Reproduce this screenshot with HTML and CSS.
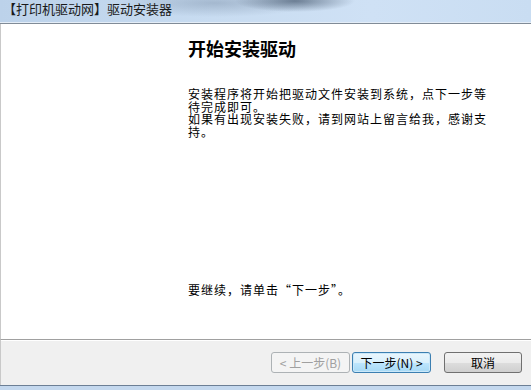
FILE: index.html
```html
<!DOCTYPE html>
<html lang="zh-CN">
<head>
    <meta charset="UTF-8">
    <meta name="viewport" content="width=device-width, initial-scale=1.0">
    <title>驱动安装器</title>
    <link rel="stylesheet" href="styles.css">
</head>
<body>

    <div class="window">
        <div class="titlebar">
            <span class="title">【打印机驱动网】驱动安装器</span>
        </div>

        <div class="content">
            <h2>开始安装驱动</h2>
            <p class="desc">安装程序将开始把驱动文件安装到系统，点下一步等待完成即可。<br>如果有出现安装失败，请到网站上留言给我，感谢支持。</p>
            <p class="hint">要继续，请单击“下一步”。</p>
        </div>

        <div class="footer">
            <button class="btn disabled">&lt; 上一步(B)</button>
            <button class="btn focused">下一步(N) &gt;</button>
            <button class="btn cancel">取消</button>
        </div>

        <div class="frame-bottom"></div>
    </div>

</body>
</html>
```

FILE: styles.css
```css
* {
    margin: 0;
    padding: 0;
    box-sizing: border-box;
}

body {
    width: 531px;
    height: 390px;
    overflow: hidden;
    font-family: "Noto Sans CJK SC", "Liberation Sans", sans-serif;
    color: #000;
    background: #fff;
}

.window {
    display: flex;
    flex-direction: column;
    height: 390px;
}

.titlebar {
    height: 24px;
    padding-left: 3px;
    display: flex;
    align-items: center;
    background:
        radial-gradient(ellipse 60px 11px at 295px 1px, rgba(70, 88, 110, 0.7), rgba(70, 88, 110, 0)),
        radial-gradient(ellipse 100px 14px at 215px 3px, rgba(110, 130, 155, 0.4), rgba(110, 130, 155, 0)),
        linear-gradient(90deg, #bcd2ea, #c8dcf1 40%, #cfe1f5 70%, #c9ddf2);
    border-bottom: 1px solid #808b97;
    box-shadow: inset 0 -1px 0 #e4edf7;
}

.title {
    font-size: 13px;
    line-height: 14px;
    margin-top: -6px;
    color: #1a1a1a;
}

.content {
    flex: 1;
    display: flex;
    flex-direction: column;
    padding: 15px 0 43px 187px;
    border-left: 1px solid #c9c9c9;
}

.content h2 {
    font-size: 18px;
    line-height: 18px;
    font-weight: bold;
}

.desc {
    width: 302px;
    margin-top: 31px;
    font-size: 12px;
    line-height: 12.5px;
    letter-spacing: 1px;
}

.hint {
    margin-top: auto;
    font-size: 12px;
    line-height: 13px;
    letter-spacing: 1px;
}

.footer {
    height: 46px;
    display: flex;
    align-items: center;
    justify-content: flex-end;
    padding-right: 9px;
    background: #f0f0f0;
    border-top: 1px solid #a0a0a0;
    box-shadow: inset 0 1px 0 #ffffff;
    border-left: 1px solid #c9c9c9;
}

.btn {
    width: 79px;
    height: 21px;
    font-family: "Noto Sans CJK SC", "Liberation Sans", sans-serif;
    font-size: 12px;
    line-height: 17px;
    border-radius: 3px;
    border: 1px solid #707070;
    background: linear-gradient(#f2f2f2, #ebebeb 50%, #dddddd 51%, #cfcfcf);
    color: #000;
}

.btn.disabled {
    border-color: #adb2b5;
    background: #f4f4f4;
    color: #a0a0a0;
}

.btn.focused {
    margin-left: 2px;
    border-color: #3c7fb1;
    background: linear-gradient(#eaf6fd, #d9f0fc 50%, #bee6fd 51%, #a7d9f5);
    box-shadow: inset 0 0 0 1px #cbe8f9;
}

.btn.cancel {
    margin-left: 13px;
    width: 78px;
}

.frame-bottom {
    height: 5px;
    border-top: 1px solid #6c7f95;
    background: #c4d8ee;
}
```
